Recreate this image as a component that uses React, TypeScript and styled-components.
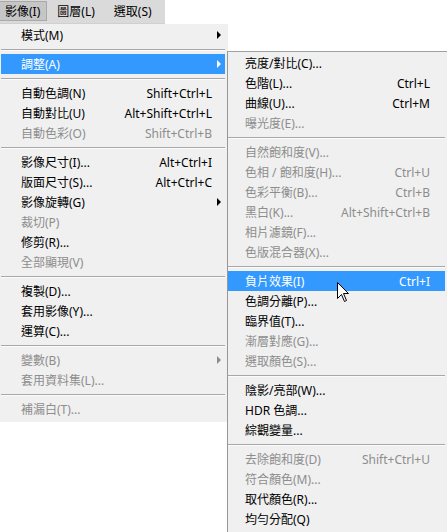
import { FC } from "react";
import styled, { createGlobalStyle } from "styled-components";

const HILITE = "#3399ff";
const TEXT = "#000000";
const DIM = "#8d8d8d";

const GlobalStyle = createGlobalStyle`
  html, body {
    margin: 0;
    padding: 0;
    background: #ffffff;
    overflow: hidden;
  }
  body {
    font-family: "Noto Sans", "Noto Sans CJK TC", sans-serif;
    font-size: 12px;
  }
`;

type Entry =
  | { sep: true }
  | {
      sep?: false;
      label: string;
      keys?: string;
      off?: boolean;
      sub?: boolean;
      active?: boolean;
    };

const mainItems: Entry[] = [
  { label: "模式(M)", sub: true },
  { sep: true },
  { label: "調整(A)", sub: true, active: true },
  { sep: true },
  { label: "自動色調(N)", keys: "Shift+Ctrl+L" },
  { label: "自動對比(U)", keys: "Alt+Shift+Ctrl+L" },
  { label: "自動色彩(O)", keys: "Shift+Ctrl+B", off: true },
  { sep: true },
  { label: "影像尺寸(I)...", keys: "Alt+Ctrl+I" },
  { label: "版面尺寸(S)...", keys: "Alt+Ctrl+C" },
  { label: "影像旋轉(G)", sub: true },
  { label: "裁切(P)", off: true },
  { label: "修剪(R)..." },
  { label: "全部顯現(V)", off: true },
  { sep: true },
  { label: "複製(D)..." },
  { label: "套用影像(Y)..." },
  { label: "運算(C)..." },
  { sep: true },
  { label: "變數(B)", sub: true, off: true },
  { label: "套用資料集(L)...", off: true },
  { sep: true },
  { label: "補漏白(T)...", off: true },
];

const adjustItems: Entry[] = [
  { label: "亮度/對比(C)..." },
  { label: "色階(L)...", keys: "Ctrl+L" },
  { label: "曲線(U)...", keys: "Ctrl+M" },
  { label: "曝光度(E)...", off: true },
  { sep: true },
  { label: "自然飽和度(V)...", off: true },
  { label: "色相 / 飽和度(H)...", keys: "Ctrl+U", off: true },
  { label: "色彩平衡(B)...", keys: "Ctrl+B", off: true },
  { label: "黑白(K)...", keys: "Alt+Shift+Ctrl+B", off: true },
  { label: "相片濾鏡(F)...", off: true },
  { label: "色版混合器(X)...", off: true },
  { sep: true },
  { label: "負片效果(I)", keys: "Ctrl+I", active: true },
  { label: "色調分離(P)..." },
  { label: "臨界值(T)..." },
  { label: "漸層對應(G)...", off: true },
  { label: "選取顏色(S)...", off: true },
  { sep: true },
  { label: "陰影/亮部(W)..." },
  { label: "HDR 色調..." },
  { label: "綜觀變量..." },
  { sep: true },
  { label: "去除飽和度(D)", keys: "Shift+Ctrl+U", off: true },
  { label: "符合顏色(M)...", off: true },
  { label: "取代顏色(R)..." },
  { label: "均勻分配(Q)" },
];

const Page = styled.div`
  display: flex;
  flex-direction: column;
  align-items: flex-start;
  width: 447px;
  height: 532px;
`;

const MenuBar = styled.div`
  display: flex;
  align-items: stretch;
  height: 24px;
  padding-right: 4px;
  background: #dadada;
  border-bottom: 1px solid #d0d0d0;
  white-space: nowrap;
`;

const BarItem = styled.div<{ $open?: boolean }>`
  display: flex;
  align-items: center;
  padding: ${(p) => (p.$open ? "0 6px 0 5px" : "0 8px 0 10px")};
  margin: 1px 0 2px;
  color: ${TEXT};
  background: ${(p) => (p.$open ? "#c6c6c6" : "transparent")};
  border: 1px solid ${(p) => (p.$open ? "#a9a9a9" : "transparent")};
  border-left: none;
`;

const Menus = styled.div`
  display: flex;
  align-items: flex-start;
`;

const MainMenu = styled.div`
  width: 228px;
  padding: 1px 0 3px;
  background: #f0f0f0;
`;

const SubMenu = styled.div`
  position: relative;
  width: 219px;
  height: 480px;
  margin: 27px 0 0 -1px;
  padding-top: 1px;
  background: #f0f0f0;
  border-top: 1px solid #a0a0a0;
  border-left: 1px solid #979797;
`;

const Row = styled.div<{ $active?: boolean; $off?: boolean; $indent: number; $inset: string }>`
  display: flex;
  align-items: center;
  height: 20px;
  margin: ${(p) => p.$inset};
  padding-left: ${(p) => p.$indent}px;
  color: ${(p) => (p.$active ? "#ffffff" : p.$off ? DIM : TEXT)};
  background: ${(p) => (p.$active ? HILITE : "transparent")};
  white-space: nowrap;
`;

const Label = styled.span`
  flex: 1;
`;

const Keys = styled.span`
  text-align: right;
`;

const ArrowSlot = styled.span<{ $w: number }>`
  display: flex;
  align-items: center;
  justify-content: center;
  width: ${(p) => p.$w}px;
`;

const Triangle = styled.span`
  width: 0;
  height: 0;
  border-top: 4px solid transparent;
  border-bottom: 4px solid transparent;
  border-left: 4px solid currentColor;
`;

const Separator = styled.div<{ $inset: string }>`
  height: 9px;
  display: flex;
  align-items: center;
  margin: ${(p) => p.$inset};

  &::after {
    content: "";
    flex: 1;
    height: 0;
    border-top: 1px solid #a8a8a8;
    border-bottom: 1px solid #fbfbfb;
  }
`;

const Cursor = styled.svg`
  position: absolute;
  left: 109px;
  top: 230px;
`;

const MenuList: FC<{ items: Entry[]; indent: number; inset: string; arrowW: number }> = ({
  items,
  indent,
  inset,
  arrowW,
}) => (
  <>
    {items.map((it, i) =>
      it.sep ? (
        <Separator key={i} $inset={inset} />
      ) : (
        <Row key={i} $active={it.active} $off={it.off} $indent={indent} $inset={inset}>
          <Label>{it.label}</Label>
          {it.keys && <Keys>{it.keys}</Keys>}
          <ArrowSlot $w={arrowW}>{it.sub && <Triangle />}</ArrowSlot>
        </Row>
      )
    )}
  </>
);

const App: FC = () => (
  <Page>
    <GlobalStyle />
    <MenuBar>
      <BarItem $open>影像(I)</BarItem>
      <BarItem>圖層(L)</BarItem>
      <BarItem>選取(S)</BarItem>
    </MenuBar>
    <Menus>
      <MainMenu>
        <MenuList items={mainItems} indent={20} inset="0 3px 0 1px" arrowW={13} />
      </MainMenu>
      <SubMenu>
        <MenuList items={adjustItems} indent={17} inset="0 2px 0 0" arrowW={15} />
        <Cursor width="13" height="21" viewBox="0 0 13 21">
          <path
            d="M0.5 0.5 L0.5 16.5 L4.5 12.5 L7.5 19.5 L9.5 18.5 L6.5 11.5 L11.5 11.5 Z"
            fill="#ffffff"
            stroke="#000000"
            strokeWidth="1"
          />
        </Cursor>
      </SubMenu>
    </Menus>
  </Page>
);

export default App;
